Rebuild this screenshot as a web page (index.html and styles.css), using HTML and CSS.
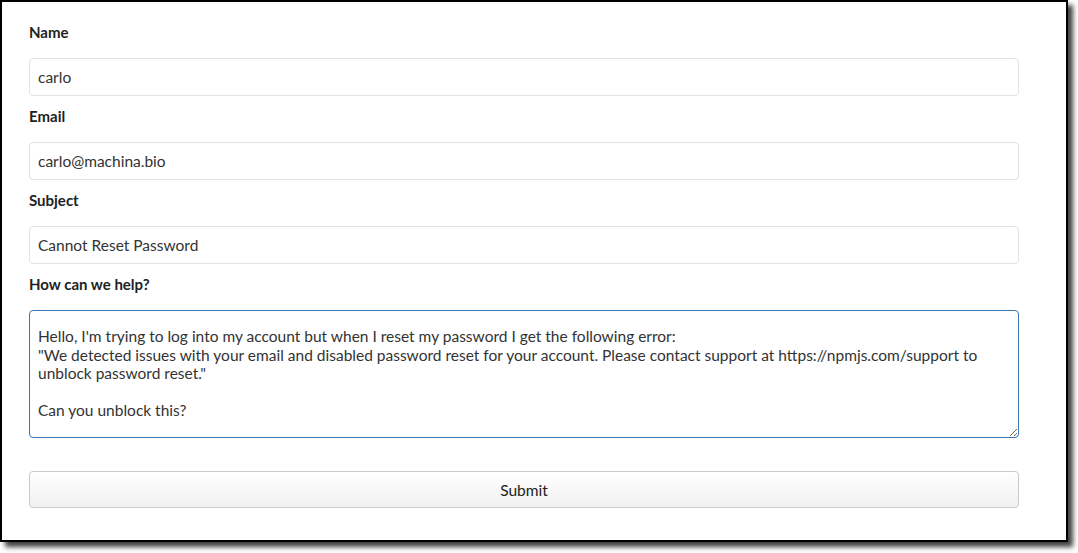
FILE: index.html
```html
<!DOCTYPE html>
<html>
<head>
<meta charset="utf-8">
<title>Contact</title>
<link rel="stylesheet" href="styles.css">
</head>
<body>
<div class="frame">
  <form class="form">
    <div class="group">
      <label class="label" for="name">Name</label>
      <input class="field" id="name" type="text" value="carlo">
    </div>
    <div class="group">
      <label class="label" for="email">Email</label>
      <input class="field" id="email" type="text" value="carlo@machina.bio">
    </div>
    <div class="group">
      <label class="label" for="subject">Subject</label>
      <input class="field" id="subject" type="text" value="Cannot Reset Password">
    </div>
    <div class="group">
      <label class="label" for="msg">How can we help?</label>
      <textarea class="area" id="msg" wrap="off">Hello, I'm trying to log into my account but when I reset my password I get the following error:
"We detected issues with your email and disabled password reset for your account. Please contact support at https://npmjs.com/support to
unblock password reset."

Can you unblock this?</textarea>
    </div>
    <button class="submit" type="button">Submit</button>
  </form>
</div>
</body>
</html>
```
FILE: styles.css
```css
html, body {
  margin: 0;
  padding: 0;
  background: #ffffff;
}
body {
  padding-bottom: 11px;
}
.frame {
  box-sizing: border-box;
  width: 1068px;
  height: 542px;
  border: 2px solid #000;
  background: #fff;
  box-shadow: 5px 5px 5px rgba(0, 0, 0, 0.75);
  padding: 20px 47px 0 27px;
  font-family: Lato, "Liberation Sans", sans-serif;
}
.form {
  display: flex;
  flex-direction: column;
  width: 990px;
}
.group {
  display: flex;
  flex-direction: column;
  margin-bottom: 10px;
}
.label {
  display: block;
  font-size: 15px;
  font-weight: 700;
  color: #222;
  line-height: 20px;
  height: 20px;
  margin-bottom: 16px;
}
.field {
  box-sizing: border-box;
  width: 990px;
  height: 38px;
  border: 1px solid #e2e2e2;
  border-radius: 4px;
  padding: 0 8px;
  font-family: Lato, "Liberation Sans", sans-serif;
  font-size: 15.5px;
  color: #333;
  background: #fff;
  outline: none;
}
.area {
  box-sizing: border-box;
  width: 990px;
  height: 128px;
  border: 1px solid #3a78b5;
  border-radius: 4px;
  padding: 16px 8px 8px;
  font-family: Lato, "Liberation Sans", sans-serif;
  font-size: 15.5px;
  line-height: 18.5px;
  color: #333;
  background: #fff;
  resize: both;
  overflow: hidden;
  white-space: pre;
  outline: none;
}
.submit {
  box-sizing: border-box;
  width: 990px;
  height: 37px;
  margin-top: 23px;
  border: 1px solid #c9c9c9;
  border-radius: 4px;
  background: linear-gradient(#ffffff, #f1f1f1);
  font-family: Lato, "Liberation Sans", sans-serif;
  font-size: 15.5px;
  color: #222;
  cursor: pointer;
}
```
